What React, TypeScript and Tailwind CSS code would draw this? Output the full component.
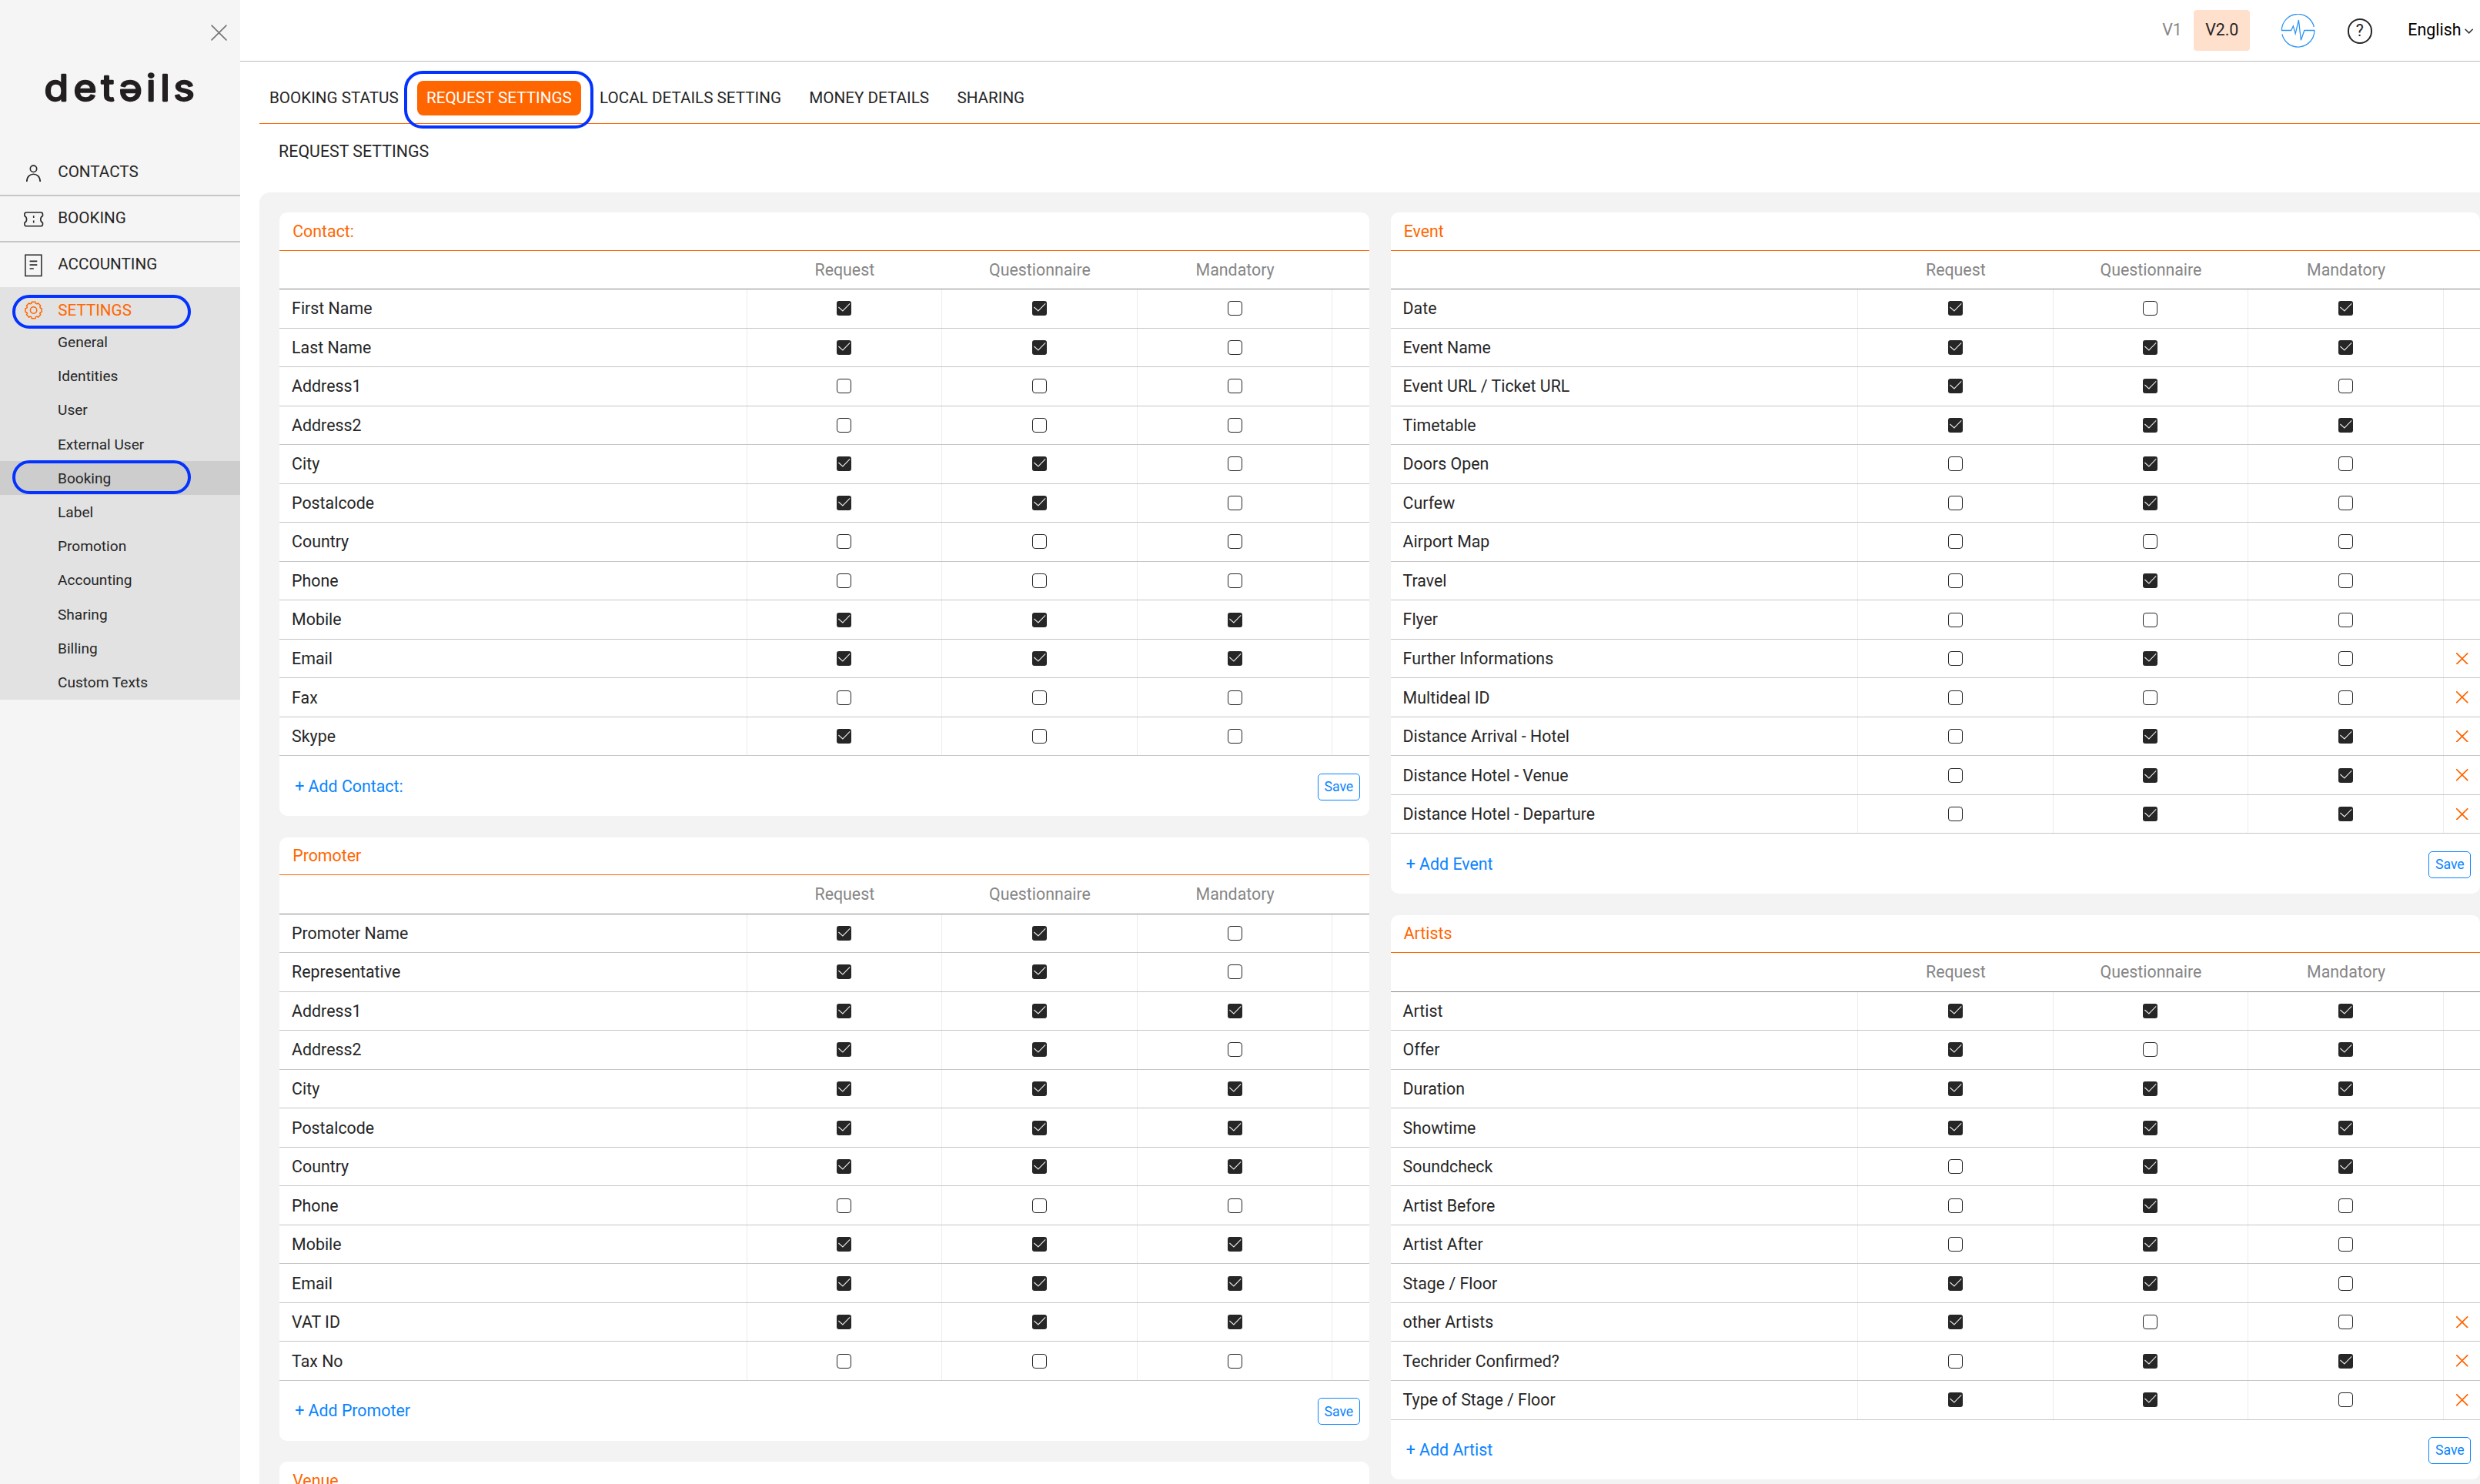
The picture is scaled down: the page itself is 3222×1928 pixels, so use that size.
import React, { ReactNode } from "react";

type Field = {
  label: string;
  // request, questionnaire, mandatory
  flags: [number, number, number];
  removable?: boolean;
};

type Group = {
  title: string;
  addLabel: string;
  fields: Field[];
};

const CONTACT: Group = {
  title: "Contact:",
  addLabel: "+ Add Contact:",
  fields: [
    { label: "First Name", flags: [1, 1, 0] },
    { label: "Last Name", flags: [1, 1, 0] },
    { label: "Address1", flags: [0, 0, 0] },
    { label: "Address2", flags: [0, 0, 0] },
    { label: "City", flags: [1, 1, 0] },
    { label: "Postalcode", flags: [1, 1, 0] },
    { label: "Country", flags: [0, 0, 0] },
    { label: "Phone", flags: [0, 0, 0] },
    { label: "Mobile", flags: [1, 1, 1] },
    { label: "Email", flags: [1, 1, 1] },
    { label: "Fax", flags: [0, 0, 0] },
    { label: "Skype", flags: [1, 0, 0] },
  ],
};

const PROMOTER: Group = {
  title: "Promoter",
  addLabel: "+ Add Promoter",
  fields: [
    { label: "Promoter Name", flags: [1, 1, 0] },
    { label: "Representative", flags: [1, 1, 0] },
    { label: "Address1", flags: [1, 1, 1] },
    { label: "Address2", flags: [1, 1, 0] },
    { label: "City", flags: [1, 1, 1] },
    { label: "Postalcode", flags: [1, 1, 1] },
    { label: "Country", flags: [1, 1, 1] },
    { label: "Phone", flags: [0, 0, 0] },
    { label: "Mobile", flags: [1, 1, 1] },
    { label: "Email", flags: [1, 1, 1] },
    { label: "VAT ID", flags: [1, 1, 1] },
    { label: "Tax No", flags: [0, 0, 0] },
  ],
};

const EVENT: Group = {
  title: "Event",
  addLabel: "+ Add Event",
  fields: [
    { label: "Date", flags: [1, 0, 1] },
    { label: "Event Name", flags: [1, 1, 1] },
    { label: "Event URL / Ticket URL", flags: [1, 1, 0] },
    { label: "Timetable", flags: [1, 1, 1] },
    { label: "Doors Open", flags: [0, 1, 0] },
    { label: "Curfew", flags: [0, 1, 0] },
    { label: "Airport Map", flags: [0, 0, 0] },
    { label: "Travel", flags: [0, 1, 0] },
    { label: "Flyer", flags: [0, 0, 0] },
    { label: "Further Informations", flags: [0, 1, 0], removable: true },
    { label: "Multideal ID", flags: [0, 0, 0], removable: true },
    { label: "Distance Arrival - Hotel", flags: [0, 1, 1], removable: true },
    { label: "Distance Hotel - Venue", flags: [0, 1, 1], removable: true },
    { label: "Distance Hotel - Departure", flags: [0, 1, 1], removable: true },
  ],
};

const ARTISTS: Group = {
  title: "Artists",
  addLabel: "+ Add Artist",
  fields: [
    { label: "Artist", flags: [1, 1, 1] },
    { label: "Offer", flags: [1, 0, 1] },
    { label: "Duration", flags: [1, 1, 1] },
    { label: "Showtime", flags: [1, 1, 1] },
    { label: "Soundcheck", flags: [0, 1, 1] },
    { label: "Artist Before", flags: [0, 1, 0] },
    { label: "Artist After", flags: [0, 1, 0] },
    { label: "Stage / Floor", flags: [1, 1, 0] },
    { label: "other Artists", flags: [1, 0, 0], removable: true },
    { label: "Techrider Confirmed?", flags: [0, 1, 1], removable: true },
    { label: "Type of Stage / Floor", flags: [1, 1, 0], removable: true },
  ],
};

const COLUMNS = ["Request", "Questionnaire", "Mandatory"];

const TABS = ["BOOKING STATUS", "REQUEST SETTINGS", "LOCAL DETAILS SETTING", "MONEY DETAILS", "SHARING"];

const SETTINGS_LINKS = [
  "General",
  "Identities",
  "User",
  "External User",
  "Booking",
  "Label",
  "Promotion",
  "Accounting",
  "Sharing",
  "Billing",
  "Custom Texts",
];

function CrossIcon({ className }: { className: string }) {
  return (
    <svg viewBox="0 0 20 20" className={className} fill="none" stroke="currentColor" strokeLinecap="round">
      <path d="M1 1 L19 19 M19 1 L1 19" />
    </svg>
  );
}

function PersonIcon() {
  return (
    <svg width="26" height="26" viewBox="0 0 26 26" fill="none" stroke="#262626" strokeWidth="1.6">
      <circle cx="12.5" cy="7.3" r="4.2" />
      <path d="M3.8 24 C3.8 10.9 21.2 10.9 21.2 24" />
    </svg>
  );
}

function TicketIcon() {
  return (
    <svg width="26" height="22" viewBox="0 0 26 22" fill="none" stroke="#262626" strokeWidth="1.6">
      <path
        d="M3.4 2 H22 Q24.5 2 24.5 4.5 V6.6 Q21.8 7.8 21.8 11 Q21.8 14.2 24.5 15.4 V17.5 Q24.5 19.8 22 19.8 H3.4 Q0.9 19.8 0.9 17.5 V15.4 Q3.6 14.2 3.6 11 Q3.6 7.8 0.9 6.6 V4.5 Q0.9 2 3.4 2 Z"
        strokeLinejoin="round"
      />
      <path d="M12.7 6.2 V9 M12.7 12.4 V15.5" />
    </svg>
  );
}

function DocumentIcon() {
  return (
    <svg width="26" height="30" viewBox="0 0 26 30" fill="none" stroke="#262626" strokeWidth="1.5">
      <rect x="1.9" y="1.2" width="21" height="27.3" />
      <path d="M7.6 9.3 H17.3 M7.6 14.2 H17.3 M7.6 19 H12.8" strokeWidth="1.7" />
    </svg>
  );
}

// eight-toothed cog outline around (12.6, 13)
function gearPath() {
  const points: string[] = [];
  for (let i = 0; i < 8; i++) {
    const mid = (i * Math.PI) / 4;
    const tooth: [number, number][] = [
      [-0.29, 9.3],
      [-0.22, 10.9],
      [0.22, 10.9],
      [0.29, 9.3],
    ];
    tooth.forEach(([offset, radius]) => {
      const x = 12.6 + radius * Math.sin(mid + offset);
      const y = 13 - radius * Math.cos(mid + offset);
      points.push(`${x.toFixed(2)} ${y.toFixed(2)}`);
    });
  }
  return `M${points.join(" L")} Z`;
}

function GearIcon() {
  return (
    <svg width="26" height="26" viewBox="0 0 26 26" fill="none" stroke="#ff6600" strokeWidth="1.5">
      <path d={gearPath()} strokeLinejoin="round" />
      <circle cx="12.6" cy="13" r="4.2" />
    </svg>
  );
}

function PulseIcon() {
  return (
    <svg width="45" height="45" viewBox="0 0 45 45" fill="none" stroke="#2f96f3" strokeWidth="1.3">
      <path d="M43.3 17 A21.2 21.2 0 0 0 1.4 21.5 H13.7 L16.3 15.8 L19.2 25.8 L23.4 8 L26.4 34.3 L30.8 21.5 H43.8 A21.2 21.2 0 0 1 1.9 26.4" />
    </svg>
  );
}

function NavItem({ icon, label }: { icon: ReactNode; label: string }) {
  return (
    <div className="flex h-[60px] items-center pl-[31px] text-[20.67px] text-[#262626]">
      <span className="flex w-[44.2px] pb-px">{icon}</span>
      <span className="pb-[3px]">{label}</span>
    </div>
  );
}

function Sidebar() {
  return (
    <aside className="w-[312px] shrink-0 bg-[#f5f5f5]">
      <div className="flex h-[53px] items-end justify-end pr-[17px]">
        <CrossIcon className="size-[21px] stroke-[1.6] text-[#777]" />
      </div>
      <svg width="312" height="142" viewBox="0 53 312 142">
        <text
          x="52.3 86.9 119.5 140.7 172.7 189.4 204.9"
          y="131.4"
          transform="scale(1.1 1)"
          fontFamily="Inter"
          fontSize="46.8"
          fill="#231f20"
          stroke="#231f20"
          strokeWidth="2.3"
          strokeLinejoin="round"
        >
          detəils
        </text>
      </svg>
      <div className="h-[60px] border-b-2 border-[#c6c6c6]">
        <NavItem icon={<PersonIcon />} label="CONTACTS" />
      </div>
      <div className="h-[60px] border-b-2 border-[#c6c6c6]">
        <NavItem icon={<TicketIcon />} label="BOOKING" />
      </div>
      <div className="h-[58px]">
        <NavItem icon={<DocumentIcon />} label="ACCOUNTING" />
      </div>
      <div className="bg-[#e2e2e2]">
        <div className="relative h-[49.5px]">
          <div className="flex h-[60px] items-center pl-[31px] text-[20.67px] text-[#ff6600]">
            <span className="flex w-[44.2px]">
              <GearIcon />
            </span>
            <span className="pt-px">SETTINGS</span>
          </div>
          <div className="absolute top-[10px] left-[16px] h-[44px] w-[232px] rounded-[22px] border-4 border-[#0433ff]" />
        </div>
        {SETTINGS_LINKS.map((label) => {
          const active = label === "Booking";
          return (
            <div
              key={label}
              className={
                "relative flex h-[44.2px] items-center pt-[1.5px] pl-[75px] text-[19.1px] text-[#262626]" +
                (active ? " bg-[#cdcdcd]" : "")
              }
            >
              {label}
              {active ? (
                <div className="absolute -top-px left-[16px] h-[44px] w-[232px] rounded-[22px] border-4 border-[#0433ff]" />
              ) : null}
            </div>
          );
        })}
      </div>
    </aside>
  );
}

function TopBar() {
  return (
    <header className="flex h-[80px] shrink-0 items-center justify-end border-b border-[#bdbdbd] pr-[8.7px] text-[21.35px]">
      <span className="mr-[15px] text-[#868686]">V1</span>
      <span className="mr-[40px] flex h-[53px] w-[73px] items-center justify-center rounded bg-[#fee0cd] pl-px text-[#262626]">
        V2.0
      </span>
      <span className="mr-[42px] pt-0.5">
        <PulseIcon />
      </span>
      <span className="mt-0.5 mr-[46.3px] flex size-[32.3px] items-center justify-center rounded-full border-2 border-[#262626] text-[21.35px] text-[#262626]">
        ?
      </span>
      <span className="mr-[4.6px] text-black">English</span>
      <svg width="11.3" height="7" viewBox="0 0 11.3 7" className="mt-0.5" fill="none" stroke="#333" strokeWidth="1.6">
        <path d="M0.6 0.7 L5.65 5.8 L10.7 0.7" />
      </svg>
    </header>
  );
}

function Tabs() {
  return (
    <nav className="flex h-[81px] items-center gap-[12.3px] border-b border-[#ff6600] pt-[15px] pl-[0.9px] text-[20.67px] text-[#262626]">
      {TABS.map((label) =>
        label === "REQUEST SETTINGS" ? (
          <div key={label} className="relative flex h-[45px] items-center rounded-lg bg-[#ff6600] px-3 pb-px text-white">
            {label}
            <div className="absolute -top-[13px] -right-[16px] -bottom-[17px] -left-[17px] rounded-[24px] border-4 border-[#0433ff]" />
          </div>
        ) : (
          <div key={label} className="flex h-[45px] items-center px-3 pb-px">
            {label}
          </div>
        ),
      )}
    </nav>
  );
}

function Checkbox({ checked }: { checked: boolean }) {
  if (!checked) {
    return <span className="size-[19px] rounded-[4px] border border-[#262626] bg-white" />;
  }
  return (
    <span className="size-[19px] rounded-[3px] bg-[#262626]">
      <svg viewBox="0 0 19 19" className="size-full" fill="none" stroke="#e8e8e8" strokeWidth="1.15">
        <path d="M2.4 8 L7.9 12.9 L17.2 3.4" />
      </svg>
    </span>
  );
}

function FieldRow({ field }: { field: Field }) {
  return (
    <div className="flex h-[50.54px] border-b border-[#c6c6c6]">
      <div className="flex w-[607.5px] items-center border-r border-[#ececec] pt-px pl-[16.1px]">{field.label}</div>
      {field.flags.map((flag, i) => (
        <div key={i} className="flex w-[253.67px] items-center justify-center border-r border-[#ececec]">
          <Checkbox checked={flag === 1} />
        </div>
      ))}
      <div className="flex flex-1 items-center justify-center pl-px">
        {field.removable ? <CrossIcon className="size-[15.5px] stroke-[2.2] text-[#ff6600]" /> : null}
      </div>
    </div>
  );
}

function CardTitle({ children }: { children: ReactNode }) {
  return (
    <h3 className="flex h-[49.6px] items-center border-b border-[#ff6600] pt-px pl-[17.2px] text-[#ff6600]">
      {children}
    </h3>
  );
}

function SettingsCard({ group }: { group: Group }) {
  return (
    <section className="overflow-hidden rounded-[10px] bg-white text-[21.35px] text-[#262626]">
      <CardTitle>{group.title}</CardTitle>
      <div className="flex h-[50.4px] border-b border-[#868686] pl-[607.5px] text-[#868686]">
        {COLUMNS.map((column) => (
          <div key={column} className="flex w-[253.67px] items-center justify-center pt-px">
            {column}
          </div>
        ))}
      </div>
      {group.fields.map((field) => (
        <FieldRow key={field.label} field={field} />
      ))}
      <div className="flex h-[77.7px] items-center justify-between pr-[11.7px] pl-[20.2px] text-[#0a84ff]">
        <span className="pt-px">{group.addLabel}</span>
        <button className="mt-0.5 flex h-[35px] w-[55px] items-center justify-center rounded-[5px] border border-[#0a84ff] text-[17.7px]">
          Save
        </button>
      </div>
    </section>
  );
}

export default function App() {
  return (
    <div className="flex h-[1928px] w-[3222px] overflow-hidden bg-white font-[Roboto,sans-serif] leading-normal">
      <Sidebar />
      <main className="flex min-w-0 flex-1 flex-col">
        <TopBar />
        <div className="flex min-h-0 flex-1 flex-col pl-[25px]">
          <Tabs />
          <h2 className="flex h-[89px] shrink-0 items-start pt-[20px] pl-[25.1px] text-[21.35px] text-[#262626]">
            REQUEST SETTINGS
          </h2>
          <div className="grid min-h-0 flex-1 grid-cols-2 items-start gap-x-[28px] overflow-hidden rounded-tl-[14px] bg-[#f3f3f3] pt-[26px] pl-[26px]">
            <div className="flex flex-col gap-[27.6px]">
              <SettingsCard group={CONTACT} />
              <SettingsCard group={PROMOTER} />
              <section className="rounded-t-[10px] bg-white text-[21.35px]">
                <CardTitle>Venue</CardTitle>
              </section>
            </div>
            <div className="flex flex-col gap-[27.6px]">
              <SettingsCard group={EVENT} />
              <SettingsCard group={ARTISTS} />
            </div>
          </div>
        </div>
      </main>
    </div>
  );
}
